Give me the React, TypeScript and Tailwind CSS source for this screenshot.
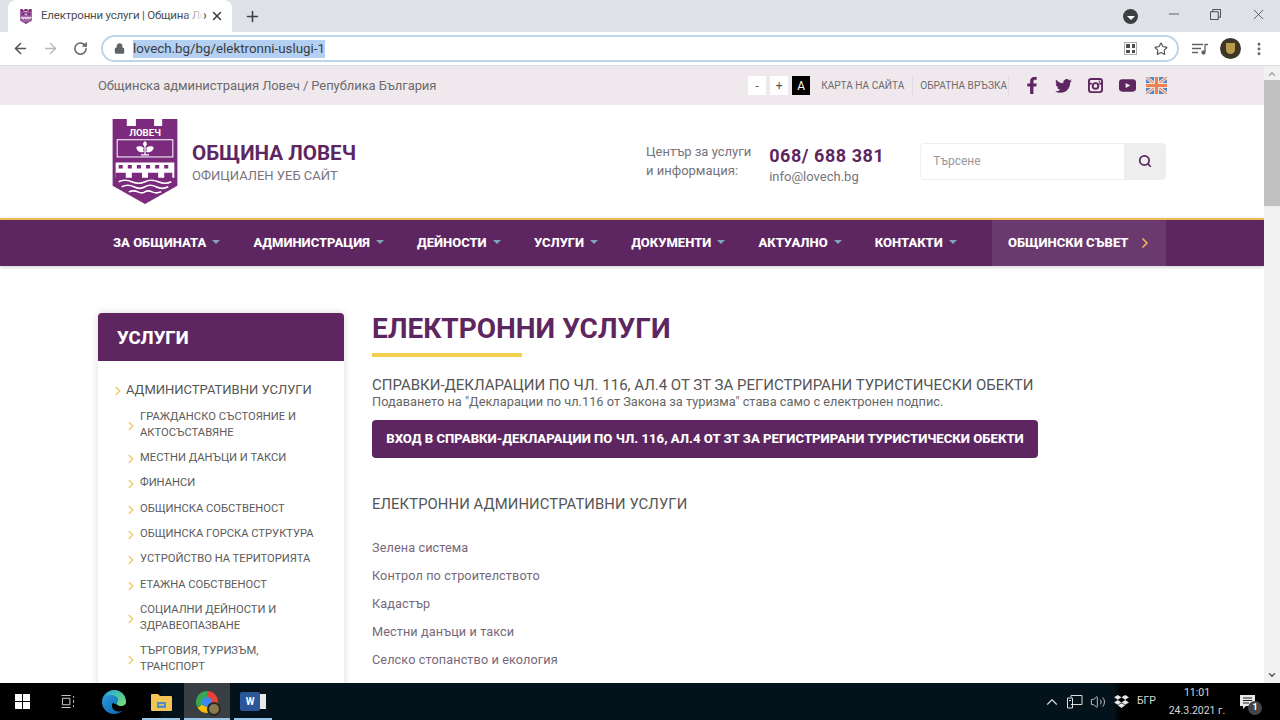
import { ArrowLeft, ArrowRight, ChevronRight, ChevronUp, Lock, MoreVertical, Plus, RotateCw, Search, Star, X, Minus, Volume2 } from "lucide-react";

const PURPLE = "text-[#5e2661]";

function Crest({ className }: { className?: string }) {
  return (
    <svg viewBox="0 0 64 84" className={className}>
      <path d="M0 0h14v7h9V0h18v7h8V0h15v66L32 84 0 66z" fill="#7b2a7d" />
      <text x="32" y="17" textAnchor="middle" fontSize="9.500" fontWeight="700" fill="#fff" fontFamily="Roboto">ЛОВЕЧ</text>
      <rect x="4.500" y="20.500" width="55" height="17" fill="#7b2a7d" stroke="#fff" strokeWidth="1" />
      <path d="M32 22c-2.500 1.500-2.500 4 0 5.500 2.500-1.500 2.500-4 0-5.500zM31 29c-1.500-2.500-6-2.500-7.500-1 0 3.500 3.500 6 7.500 4.500-1-1.500-1-2 0-3.500zM33 29c1.500-2.500 6-2.500 7.500-1 0 3.500-3.500 6-7.500 4.500 1-1.500 1-2 0-3.500z" fill="#fff" />
      <path d="M32 26v10M28 35.500h8" stroke="#fff" strokeWidth="1.200" />
      <path d="M3 43h58v15H3z" fill="#fff" />
      <path d="M6 45.500h4v3.500H6zM15 45.500h4v3.500h-4zM24 45.500h4v3.500h-4zM33 45.500h4v3.500h-4zM42 45.500h4v3.500h-4zM51 45.500h4v3.500h-4z" fill="#7b2a7d" />
      <path d="M3 59v-6h10v6h6v-6h10v6h6v-6h10v6h6v-6h8v6z" fill="#7b2a7d" />
      <path d="M6 62q6-3 13 0t13 0 13 0 13 0M9 67q6-3 12 0t11 0 11 0 12 0M16 72q5-2 9 0t7 0 7 0 9 0" stroke="#fff" strokeWidth="1.600" fill="none" />
    </svg>
  );
}

function Flag() {
  return (
    <svg viewBox="0 0 21 17" className="h-[17px] w-[21px]">
      <rect width="21" height="17" fill="#4f86c2" />
      <path d="M0 0l21 17M21 0L0 17" stroke="#e9e3e6" strokeWidth="3.400" />
      <path d="M0 0l21 17M21 0L0 17" stroke="#e58a66" strokeWidth="1.200" />
      <path d="M10.500 0v17M0 8.500h21" stroke="#e9e3e6" strokeWidth="5" />
      <path d="M10.500 0v17M0 8.500h21" stroke="#ef7f4f" strokeWidth="3" />
    </svg>
  );
}

function TabStrip() {
  return (
    <div className="flex h-8 items-end justify-between bg-[#dee1e6] pl-2">
      <div className="flex items-center">
        <div className="flex h-[32px] w-[224px] items-center rounded-t-lg bg-white pl-3 pr-2">
          <Crest className="h-[15px] w-[12px]" />
          <span className="relative ml-[9px] w-[169px] whitespace-nowrap text-[11.5px] tracking-[-0.2px] text-[#4a4d51]">
            Електронни услуги | Община Ло
            <span className="absolute inset-y-0 right-[6px] w-[20px] bg-gradient-to-r from-transparent to-white" />
          </span>
          <X size={14} strokeWidth={2.6} className="text-[#3c4043]" />
        </div>
        <Plus size={17} strokeWidth={2.2} className="ml-[12px] text-[#3c4043]" />
      </div>
      <div className="flex h-8 items-center text-[#3c4043]">
        <div className="mr-[28px] mt-[1px] flex h-[15px] w-[15px] items-center justify-center rounded-full bg-[#3c4043]">
          <div className="mt-[2px] h-0 w-0 border-x-[4px] border-t-[4px] border-x-transparent border-t-white" />
        </div>
        <Minus size={16} strokeWidth={1.2} className="mb-1 mr-[28px]" />
        <svg viewBox="0 0 12 12" className="mb-1 mr-[29px] h-[11px] w-[11px]" fill="none" stroke="#3c4043">
          <path d="M3 3V.5h8.500V9H9M.5 3h8.500v8.500H.5z" />
        </svg>
        <X size={17} strokeWidth={1.1} className="mb-1 mr-[13px]" />
      </div>
    </div>
  );
}

function Toolbar() {
  return (
    <div className="flex h-[34px] items-center border-b border-[#dadce0] bg-white pl-3 pr-2 text-[#5f6368]">
      <ArrowLeft size={17} strokeWidth={2.2} className="text-[#50545a]" />
      <ArrowRight size={17} strokeWidth={1.8} className="ml-[13px] text-[#b4b7bb]" />
      <RotateCw size={15} strokeWidth={2.4} className="ml-[14px]" />
      <div className="ml-[13px] flex h-[27px] w-[1078px] items-center rounded-full border-2 border-[#bdd5ea] pl-[11px] pr-2">
        <Lock size={11} strokeWidth={2.6} fill="currentColor" className="text-[#5f6368]" />
        <span className="ml-[8px] bg-[#b3d0f2] text-[13.35px] leading-[18px] text-[#3a3d41]">lovech.bg/bg/elektronni-uslugi-1</span>
        <div className="ml-auto mr-[17px] grid h-[13px] w-[13px] grid-cols-2 gap-[2px] border border-[#a9abad] p-[1px]">
          <div className="bg-[#4c4f52]" />
          <div className="bg-[#4c4f52]" />
          <div className="bg-[#4c4f52]" />
          <div className="bg-[#4c4f52]" />
        </div>
        <Star size={14} strokeWidth={2} className="mr-[1px] text-[#4f5256]" />
      </div>
      <svg viewBox="0 0 16 12" className="ml-[13px] h-[12px] w-[16px]" fill="none" stroke="#5f6368" strokeWidth="1.300">
        <path d="M0 1.500h11M0 5.500h9M0 9.500h6M13 1.500h3M13 1v8" />
        <circle cx="11.500" cy="9.500" r="1.500" fill="#5f6368" />
      </svg>
      <div className="ml-[12px] flex h-[21px] w-[21px] items-center justify-center rounded-full bg-[#3e3728]">
        <div className="h-[11px] w-[9px] rounded-b-md bg-[#b99b4c]" />
      </div>
      <MoreVertical size={16} strokeWidth={2.4} className="ml-[10px]" />
    </div>
  );
}

function Social() {
  return (
    <div className="flex items-center text-[#5e2661]">
      <svg viewBox="0 0 10 18" className="h-[17px] w-[10px]" fill="currentColor">
        <path d="M3 18V10H0V7h3V4.500C3 1.700 4.700 0 7.200 0H10v3H8.200C7 3 6.500 3.600 6.500 4.700V7H10l-.5 3h-3v8z" />
      </svg>
      <svg viewBox="0 0 24 20" className="ml-[18px] h-[14px] w-[17px]" fill="currentColor">
        <path d="M24 2.400a10 10 0 0 1-2.800.8A5 5 0 0 0 23.300.5a10 10 0 0 1-3.100 1.200 4.900 4.900 0 0 0-8.400 4.500A14 14 0 0 1 1.700.9a4.900 4.900 0 0 0 1.500 6.600 5 5 0 0 1-2.200-.6c0 2.400 1.700 4.400 3.900 4.900a5 5 0 0 1-2.200.1 4.900 4.900 0 0 0 4.600 3.400A10 10 0 0 1 0 17.400 14 14 0 0 0 7.500 19.600c9.100 0 14.300-7.700 14-14.600A10 10 0 0 0 24 2.400z" />
      </svg>
      <svg viewBox="0 0 16 16" className="ml-[16px] h-[15px] w-[15px]" fill="none" stroke="currentColor" strokeWidth="2">
        <rect x="1" y="1" width="14" height="14" rx="2.500" />
        <circle cx="8" cy="8.500" r="3" />
        <path d="M1 6h3M12 6h3M11.500 3.800h1.200" />
      </svg>
      <svg viewBox="0 0 18 13" className="ml-[16px] h-[13px] w-[17px]">
        <rect width="18" height="13" rx="3.500" fill="currentColor" />
        <path d="M7 3.800v5.400L12 6.500z" fill="#efe9ee" />
      </svg>
      <div className="ml-[10px]"><Flag /></div>
    </div>
  );
}

function TopBar() {
  return (
    <div className="bg-[#efe9ee]">
      <div className="flex h-[39px] items-center justify-between pl-[98px] pr-[97px]">
        <span className="text-[13px] tracking-[-0.08px] text-[#6e6a6d]">Общинска администрация Ловеч / Република България</span>
        <div className="flex items-center">
          <div className="flex items-center text-xs">
            <span className="flex h-[19px] w-[18px] items-center justify-center bg-white text-[#555]">-</span>
            <span className="ml-[4px] flex h-[19px] w-[18px] items-center justify-center bg-white text-[#555]">+</span>
            <span className="ml-[4px] flex h-[19px] w-[18px] items-center justify-center bg-black text-white">A</span>
          </div>
          <span className="ml-[11px] border-r border-[#e2dce1] pr-2 text-[10.1px] leading-[19px] text-[#6e6a6d]">КАРТА НА САЙТА</span>
          <span className="ml-[7px] border-r border-[#e2dce1] pr-[1px] text-[10.1px] leading-[19px] text-[#6e6a6d]">ОБРАТНА ВРЪЗКА</span>
          <div className="ml-[18px]"><Social /></div>
        </div>
      </div>
    </div>
  );
}

function Masthead() {
  return (
    <div className="flex h-[113px] items-center bg-white pb-[1px] pl-[112px]">
      <Crest className="h-[85px] w-[66px]" />
      <div className="ml-[14px] mt-[2px]">
        <div className={`text-[20.6px] font-bold leading-[28px] ${PURPLE}`}>ОБЩИНА ЛОВЕЧ</div>
        <div className="text-[13px] leading-[18px] text-[#77737a]">ОФИЦИАЛЕН УЕБ САЙТ</div>
      </div>
      <div className="ml-[290px] text-[13px] leading-[19px] text-[#77737a]">
        <div>Център за услуги</div>
        <div>и информация:</div>
      </div>
      <div className="ml-[18px] mt-[7px]">
        <div className={`text-[18px] font-bold leading-[24px] tracking-[0.55px] ${PURPLE}`}>068/ 688 381</div>
        <div className="text-[13px] leading-[18px] text-[#77737a]">info@lovech.bg</div>
      </div>
      <div className="ml-[36px] flex h-[37px] w-[246px] rounded-sm border border-[#f0eef0]">
        <div className="flex-1 pl-3 text-xs leading-[35px] text-[#9a979a]">Търсене</div>
        <div className={`flex w-[41px] items-center justify-center bg-[#efeeef] ${PURPLE}`}>
          <Search size={14} strokeWidth={3} />
        </div>
      </div>
    </div>
  );
}

const navItems = ["ЗА ОБЩИНАТА", "АДМИНИСТРАЦИЯ", "ДЕЙНОСТИ", "УСЛУГИ", "ДОКУМЕНТИ", "АКТУАЛНО", "КОНТАКТИ"];

function Nav() {
  return (
    <div className="flex h-[48px] items-stretch border-t-2 border-[#eebb55] bg-[#5e2661] pb-[1px] pl-[113px] shadow-[0_1px_4px_rgba(0,0,0,0.2)]">
      <div className="flex items-center gap-[33.200px]">
        {navItems.map((item) => (
          <div key={item} className="flex items-center gap-[6px]">
            <span className="text-[13px] font-extrabold text-white">{item}</span>
            <div className="mb-[2px] h-0 w-0 border-x-[4px] border-t-[4px] border-x-transparent border-t-[#7fa6b4]" />
          </div>
        ))}
      </div>
      <div className="-mb-[1px] ml-auto mr-[98px] flex w-[174px] items-center bg-[#6a3a6e] pb-[1px] pl-[16px]">
        <span className="text-[13px] font-extrabold text-white">ОБЩИНСКИ СЪВЕТ</span>
        <ChevronRight size={16} strokeWidth={2.6} className="ml-[9px] text-[#f4b552]" />
      </div>
    </div>
  );
}

const sideItems = [
  "ГРАЖДАНСКО СЪСТОЯНИЕ И АКТОСЪСТАВЯНЕ",
  "МЕСТНИ ДАНЪЦИ И ТАКСИ",
  "ФИНАНСИ",
  "ОБЩИНСКА СОБСТВЕНОСТ",
  "ОБЩИНСКА ГОРСКА СТРУКТУРА",
  "УСТРОЙСТВО НА ТЕРИТОРИЯТА",
  "ЕТАЖНА СОБСТВЕНОСТ",
  "СОЦИАЛНИ ДЕЙНОСТИ И ЗДРАВЕОПАЗВАНЕ",
  "ТЪРГОВИЯ, ТУРИЗЪМ, ТРАНСПОРТ",
];

function Sidebar() {
  return (
    <div className="w-[246px] shrink-0 rounded-t-sm bg-white shadow-[0_0_8px_rgba(0,0,0,0.15)]">
      <div className="flex h-[48px] items-center rounded-t-sm bg-[#5e2661] pl-[19px] pt-[3px] text-[18.5px] font-extrabold text-white">УСЛУГИ</div>
      <div className="pb-6 pl-[13px] pt-[19px]">
        <div className="flex items-center text-[13px] leading-[19px] text-[#555]">
          <ChevronRight size={14} strokeWidth={2.6} className="mr-[1px] mt-[2px] text-[#f0cb6e]" />
          АДМИНИСТРАТИВНИ УСЛУГИ
        </div>
        <div className="mt-[9.500px] flex flex-col gap-[9.350px] pl-[13px]">
          {sideItems.map((item) => (
            <div key={item} className="flex items-center">
              <ChevronRight size={14} strokeWidth={2.6} className="mr-[2px] mt-[2px] shrink-0 text-[#f0cb6e]" />
              <span className="w-[180px] text-[11.2px] leading-[16px] text-[#5b5b5b]">{item}</span>
            </div>
          ))}
        </div>
      </div>
    </div>
  );
}

const serviceLinks = ["Зелена система", "Контрол по строителството", "Кадастър", "Местни данъци и такси", "Селско стопанство и екология"];

function Main() {
  return (
    <div className="ml-[28px] flex-1">
      <h1 className={`text-[28px] font-bold leading-[32px] ${PURPLE}`}>ЕЛЕКТРОННИ УСЛУГИ</h1>
      <div className="mt-[8px] h-[4px] w-[150px] bg-[#f4cf4e]" />
      <div className="mt-[19px] whitespace-nowrap text-[15px] leading-[18px] text-[#555]">СПРАВКИ-ДЕКЛАРАЦИИ ПО ЧЛ. 116, АЛ.4 ОТ ЗТ ЗА РЕГИСТРИРАНИ ТУРИСТИЧЕСКИ ОБЕКТИ</div>
      <div className="whitespace-nowrap text-[12.8px] leading-[15px] text-[#666]">Подаването на "Декларации по чл.116 от Закона за туризма" става само с електронен подпис.</div>
      <div className="mt-[11px] flex h-[38px] w-[666px] items-center justify-center rounded-sm bg-[#5e2661] whitespace-nowrap text-[13.15px] font-extrabold text-white">
        ВХОД В СПРАВКИ-ДЕКЛАРАЦИИ ПО ЧЛ. 116, АЛ.4 ОТ ЗТ ЗА РЕГИСТРИРАНИ ТУРИСТИЧЕСКИ ОБЕКТИ
      </div>
      <div className="mt-[36px] text-[14.800px] leading-[20px] tracking-[0.1px] text-[#555]">ЕЛЕКТРОННИ АДМИНИСТРАТИВНИ УСЛУГИ</div>
      <div className="mt-[25px] flex flex-col gap-[10px]">
        {serviceLinks.map((link) => (
          <div key={link} className="text-[12.7px] leading-[18px] tracking-[0.1px] text-[#77687a]">{link}</div>
        ))}
      </div>
    </div>
  );
}

function Scrollbar() {
  return (
    <div className="flex w-4 shrink-0 flex-col items-center bg-[#f1f1f1]">
      <ChevronUp size={10} strokeWidth={3} className="mt-[3px] text-[#a3a3a3]" />
      <div className="mt-[1px] h-[126px] w-full bg-[#c1c1c1]" />
      <div className="flex-1" />
      <ChevronUp size={10} strokeWidth={3} className="mb-[3px] rotate-180 text-[#505050]" />
    </div>
  );
}

function EdgeIcon() {
  return (
    <svg viewBox="0 0 24 24" className="h-[24px] w-[24px]">
      <defs>
        <linearGradient id="edgeBlue" x1="0" y1="0" x2="1" y2="1">
          <stop offset="0" stopColor="#2ea3dd" />
          <stop offset="1" stopColor="#0b5cab" />
        </linearGradient>
        <linearGradient id="edgeGreen" x1="0" y1="0" x2="1" y2="1">
          <stop offset="0" stopColor="#1fa8d8" />
          <stop offset="1" stopColor="#7ee06c" />
        </linearGradient>
      </defs>
      <path d="M12 0C5.400 0 0 5.400 0 12c0 6.600 5.400 12 12 12 3.500 0 6.500-1.200 8.500-3.500-3 1.500-7 1.300-9.200-1.200-1.700-2-1.800-5-.2-6.800 1.300 2 3 2 5 2h8C24 6 19 0 12 0z" fill="url(#edgeBlue)" />
      <path d="M12 0C18.600 0 24 5 24 11.500c0 2.500-2 4.500-5 4.500-3.300 0-4-1.500-4-2.500 0-2.500 2-3 .5-5.500C13.500 5 7.500 3.500 3 7.500 5 3 8.500 0 12 0z" fill="url(#edgeGreen)" />
    </svg>
  );
}

function Taskbar() {
  return (
    <div className="flex h-[37px] items-stretch bg-[linear-gradient(90deg,#000_12.4%,#04121c_12.6%,#04121c_87%,#000_87.6%)] text-[#e8e8e8]">
      <div className="flex w-[45px] items-center justify-center">
        <div className="grid h-[15px] w-[15px] grid-cols-2 gap-[1px]">
          <div className="bg-white" />
          <div className="bg-white" />
          <div className="bg-white" />
          <div className="bg-white" />
        </div>
      </div>
      <div className="flex w-[45px] items-center justify-center">
        <svg viewBox="0 0 16 14" className="h-[13px] w-[16px]" fill="none" stroke="#ddd">
          <path d="M1 .5h10M1 13.500h10M2 3.500h8v7H2zM14 1v2M14 5.500v3M14 11v2" />
        </svg>
      </div>
      <div className="flex w-[48px] items-center justify-center">
        <EdgeIcon />
      </div>
      <div className="relative flex w-[46px] items-center justify-center">
        <svg viewBox="0 0 21 18" className="h-[18px] w-[21px]">
          <path d="M0 2a1 1 0 0 1 1-1h6l2 2h11a1 1 0 0 1 1 1v13a1 1 0 0 1-1 1H1a1 1 0 0 1-1-1z" fill="#f3c555" />
          <path d="M6 9h9v6H6z" fill="#4b90c9" />
          <path d="M8 11h5v1.500H8z" fill="#f3c555" />
        </svg>
        <div className="absolute bottom-0 left-[4px] h-[2px] w-[38px] bg-[#99c6e8]" />
      </div>
      <div className="relative flex w-[46px] items-center justify-center bg-[#3a3f43]">
        <div className="relative h-[22px] w-[22px] rounded-full bg-[conic-gradient(#ea4335_0_33%,#fbbc05_33%_66%,#34a853_66%_100%)] p-[6px]">
          <div className="h-full w-full rounded-full bg-[#4285f4]" />
          <div className="absolute -bottom-[3px] -right-[3px] h-[14px] w-[14px] rounded-full border-2 border-[#2d2820] bg-[#8a7a50]" />
        </div>
        <div className="absolute bottom-0 left-0 h-[2px] w-full bg-[#99c6e8]" />
      </div>
      <div className="relative flex w-[46px] items-center justify-center">
        <div className="flex h-[19px] w-[20px] items-center justify-center rounded-[2px] bg-[#2b579a] text-[10px] font-bold text-white">W</div>
        <div className="h-[15px] w-[6px] bg-[#e8e8e8]" />
        <div className="absolute bottom-0 left-[4px] h-[2px] w-[38px] bg-[#99c6e8]" />
      </div>
      <div className="ml-auto flex items-center pr-[22px] text-[#d8d8d8]">
        <ChevronUp size={18} strokeWidth={1.5} />
        <svg viewBox="0 0 16 14" className="ml-[6px] h-[14px] w-[16px]" fill="none" stroke="#ddd">
          <path d="M4 2.500V.5h11v9H4M.5 3h5v10h-5zM2 5.500h2" />
        </svg>
        <Volume2 size={16} strokeWidth={1.3} className="ml-[7px]" />
        <svg viewBox="0 0 16 14" className="ml-[8px] h-[13px] w-[15px]" fill="#e8e8e8">
          <path d="M4 0l4 2.500L4 5 0 2.500zM12 0l4 2.500L12 5 8 2.500zM4 5.500l4 2.500-4 2.500L0 8zM12 5.500L16 8l-4 2.500L8 8zM4 11l4-2 4 2-4 3z" />
        </svg>
        <span className="ml-[8px] text-[10.5px] leading-none">БГР</span>
        <div className="ml-[11px] w-[60px] text-center text-[10.5px] leading-[18px]">
          <div>11:01</div>
          <div>24.3.2021 г.</div>
        </div>
        <div className="relative ml-[13px] mr-[3px]">
          <svg viewBox="0 0 15 14" className="h-[14px] w-[15px]">
            <path d="M0 0h15v11H6l-3 3v-3H0z" fill="#e8e8e8" />
            <path d="M3 3h9M3 5.500h9M3 8h6" stroke="#222" strokeWidth="1" />
          </svg>
          <div className="absolute -bottom-[6px] -right-[7px] flex h-[14px] w-[14px] items-center justify-center rounded-full bg-[#444] text-[9px] font-bold text-white">1</div>
        </div>
      </div>
    </div>
  );
}

export default function App() {
  return (
    <div className="flex h-[720px] w-[1280px] flex-col overflow-hidden bg-white font-['Roboto',sans-serif]">
      <TabStrip />
      <Toolbar />
      <div className="flex h-[617px] overflow-hidden">
        <div className="w-[1264px] shrink-0 overflow-hidden">
          <TopBar />
          <Masthead />
          <Nav />
          <div className="flex pl-[98px] pt-[47px]">
            <Sidebar />
            <Main />
          </div>
        </div>
        <Scrollbar />
      </div>
      <Taskbar />
    </div>
  );
}
